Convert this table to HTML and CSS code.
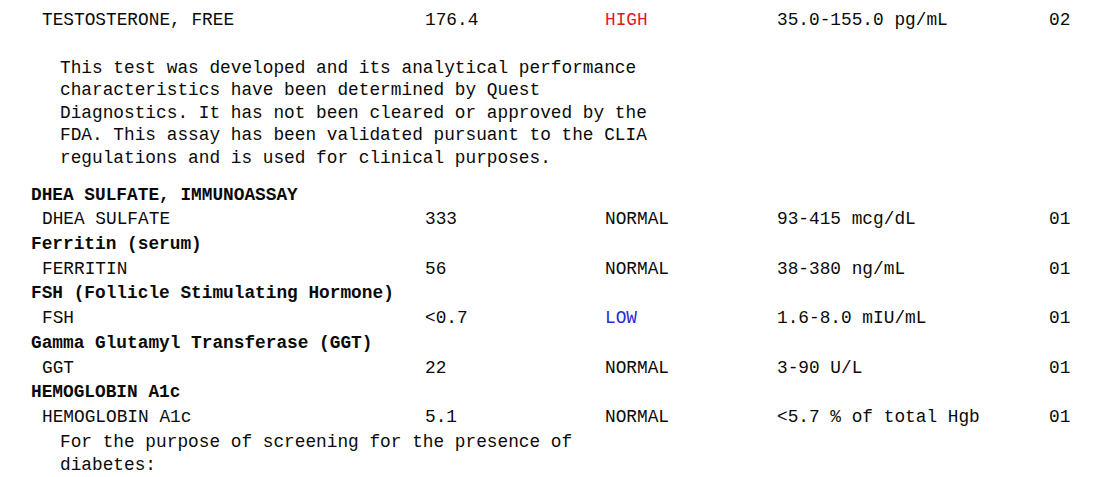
FILE: index.html
```html
<!DOCTYPE html>
<html>
<head>
<meta charset="utf-8">
<link rel="stylesheet" href="styles.css">
</head>
<body>
<div class="report">
  <div class="row first">
    <span class="name">TESTOSTERONE, FREE</span>
    <span>176.4</span>
    <span class="high">HIGH</span>
    <span>35.0-155.0 pg/mL</span>
    <span>02</span>
  </div>
  <div class="comment gap-top gap-bottom">This test was developed and its analytical performance<br>characteristics have been determined by Quest<br>Diagnostics. It has not been cleared or approved by the<br>FDA. This assay has been validated pursuant to the CLIA<br>regulations and is used for clinical purposes.</div>

  <div class="group">DHEA SULFATE, IMMUNOASSAY</div>
  <div class="row">
    <span class="name">DHEA SULFATE</span>
    <span>333</span>
    <span>NORMAL</span>
    <span>93-415 mcg/dL</span>
    <span>01</span>
  </div>

  <div class="group">Ferritin (serum)</div>
  <div class="row">
    <span class="name">FERRITIN</span>
    <span>56</span>
    <span>NORMAL</span>
    <span>38-380 ng/mL</span>
    <span>01</span>
  </div>

  <div class="group">FSH (Follicle Stimulating Hormone)</div>
  <div class="row">
    <span class="name">FSH</span>
    <span>&lt;0.7</span>
    <span class="low">LOW</span>
    <span>1.6-8.0 mIU/mL</span>
    <span>01</span>
  </div>

  <div class="group">Gamma Glutamyl Transferase (GGT)</div>
  <div class="row">
    <span class="name">GGT</span>
    <span>22</span>
    <span>NORMAL</span>
    <span>3-90 U/L</span>
    <span>01</span>
  </div>

  <div class="group">HEMOGLOBIN A1c</div>
  <div class="row">
    <span class="name">HEMOGLOBIN A1c</span>
    <span>5.1</span>
    <span>NORMAL</span>
    <span>&lt;5.7 % of total Hgb</span>
    <span>01</span>
  </div>
  <div class="comment tight">For the purpose of screening for the presence of<br>diabetes:</div>
</div>
</body>
</html>
```

FILE: styles.css
```css
html, body {
  margin: 0;
  padding: 0;
  background: #ffffff;
}

body {
  font-family: "Liberation Mono", "Courier New", monospace;
  font-size: 17.8px;
  color: #0a0a0a;
}

.report {
  padding-left: 31px;
  padding-top: 8px;
}

.row {
  display: grid;
  grid-template-columns: 394px 180px 172px 272px auto;
  line-height: 24.7px;
  white-space: pre;
}

.row .name {
  padding-left: 11px;
}

.group {
  font-weight: bold;
  line-height: 24.7px;
  white-space: pre;
}

.comment {
  padding-left: 29px;
  line-height: 22.6px;
  white-space: nowrap;
}

.gap-top {
  margin-top: 24px;
}

.gap-bottom {
  margin-bottom: 13px;
}

.tight {
  margin-top: 1.5px;
}

.high {
  color: #e01b1b;
}

.low {
  color: #2a2ad6;
}
```
